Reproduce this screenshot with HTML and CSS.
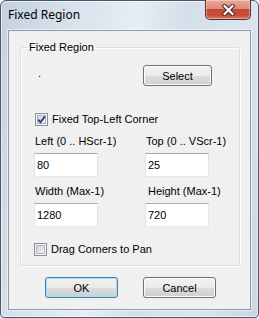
FILE: index.html
```html
<!DOCTYPE html>
<html>
<head>
<meta charset="utf-8">
<link rel="stylesheet" href="styles.css">
</head>
<body>
<div class="window">
  <div class="titlebar">
    <span class="title">Fixed Region</span>
    <button class="close" aria-label="Close">
      <svg width="13" height="12" viewBox="0 0 13 12">
        <path d="M2.5 2 L10.5 10 M10.5 2 L2.5 10" stroke="#4a2a25" stroke-width="4.2" stroke-linecap="square" fill="none"/>
        <path d="M2.5 2 L10.5 10 M10.5 2 L2.5 10" stroke="#ffffff" stroke-width="2.2" stroke-linecap="square" fill="none"/>
      </svg>
    </button>
  </div>
  <div class="client">
    <fieldset class="group">
      <legend class="group-label">Fixed Region</legend>
      <div class="select-row">
        <span class="dot">.</span>
        <button class="btn select-btn">Select</button>
      </div>
      <label class="check first-check">
        <span class="box">
          <svg width="9" height="9" viewBox="0 0 9 9">
            <path d="M1.2 4.6 L3.5 7.2 L8 1.2" stroke="#2b3f86" stroke-width="1.9" fill="none"/>
          </svg>
        </span>
        <span>Fixed Top-Left Corner</span>
      </label>
      <div class="fields">
        <div class="field">
          <span class="field-label">Left (0 .. HScr-1)</span>
          <div class="input">80</div>
        </div>
        <div class="field">
          <span class="field-label">Top (0 .. VScr-1)</span>
          <div class="input">25</div>
        </div>
        <div class="field">
          <span class="field-label">Width (Max-1)</span>
          <div class="input">1280</div>
        </div>
        <div class="field">
          <span class="field-label right-pad">Height (Max-1)</span>
          <div class="input">720</div>
        </div>
      </div>
      <label class="check drag-check">
        <span class="box empty"></span>
        <span>Drag Corners to Pan</span>
      </label>
    </fieldset>
    <div class="actions">
      <button class="btn default">OK</button>
      <button class="btn">Cancel</button>
    </div>
  </div>
</div>
</body>
</html>
```
FILE: styles.css
```css
* { box-sizing: border-box; }
html, body { margin: 0; padding: 0; }
body {
  width: 259px;
  height: 318px;
  overflow: hidden;
  background: #ffffff;
  font-family: "Liberation Sans", Arial, sans-serif;
  font-size: 11px;
  color: #000;
}
.window {
  width: 259px;
  height: 318px;
  border: 1px solid #4f5862;
  border-radius: 6px 6px 4px 4px;
  background: linear-gradient(100deg, #c3d1df 0%, #d9e3ee 25%, #e6edf4 45%, #d3dfeb 60%, #dbe5ef 80%, #c8d5e3 100%);
  box-shadow: inset 0 0 0 1px rgba(255,255,255,0.55);
  display: flex;
  flex-direction: column;
}
.titlebar {
  height: 29px;
  display: flex;
  align-items: flex-start;
  flex-shrink: 0;
}
.title {
  font-family: "Noto Sans", "Open Sans", sans-serif;
  font-size: 12px;
  line-height: 16px;
  margin: 6px 0 0 7px;
  flex: 1;
  color: #000;
}
.close {
  margin: -1px 7px 0 0;
  width: 46px;
  height: 20px;
  padding: 0;
  border: 1px solid #5a2b24;
  border-top: none;
  border-radius: 0 0 5px 5px;
  background: linear-gradient(#e9a99b 0%, #dd8a78 45%, #c7482f 50%, #c44e36 80%, #d77b5f 100%);
  box-shadow: inset 0 0 0 1px rgba(255,220,210,0.5);
  display: flex;
  align-items: center;
  justify-content: center;
}
.close svg { display: block; margin-left: 1px; }
.client {
  margin: 0 7px 7px 7px;
  flex: 1;
  background: #f0f0f0;
  border: 1px solid #8e9aa6;
  box-shadow: 0 0 0 1px rgba(255,255,255,0.5);
  display: flex;
  flex-direction: column;
}
.group {
  margin: 10px 10px 0 11px;
  padding: 0 0 9px 0;
  border: 1px solid #d5dfe5;
  border-radius: 3px;
  box-shadow: inset 1px 1px 0 #ffffff, 1px 1px 0 #ffffff;
  min-width: 0;
}
.group-label {
  margin-left: 6px;
  padding: 0 2px;
  line-height: 13px;
}
.select-row {
  margin-top: 11px;
  padding: 0 27px 0 17px;
  display: flex;
  justify-content: space-between;
  align-items: flex-start;
}
.dot {
  line-height: 13px;
  margin-top: 2px;
}
.btn {
  font-family: "Liberation Sans", Arial, sans-serif;
  font-size: 11px;
  color: #000;
  height: 21px;
  padding: 0;
  border: 1px solid #707070;
  border-radius: 3px;
  background: linear-gradient(#f2f2f2 0%, #ebebeb 50%, #dddddd 50%, #cfcfcf 100%);
  box-shadow: inset 0 0 0 1px #fbfbfb;
}
.select-btn { width: 69px; }
.check {
  display: flex;
  align-items: center;
  gap: 4px;
  line-height: 13px;
}
.first-check { margin-top: 27px; padding-left: 14px; }
.drag-check { margin-top: 16px; padding-left: 13px; }
.box {
  width: 13px;
  height: 13px;
  border: 1px solid #8e8f8f;
  background: #f4f4f4;
  box-shadow: inset 0 0 0 1px #f6f6f6, inset 0 0 0 2px #b0b7c1;
  background-image: linear-gradient(135deg, #c9ced6, #f5f6f7);
  display: flex;
  align-items: center;
  justify-content: center;
  flex-shrink: 0;
}
.box svg { display: block; }
.fields {
  margin-top: 9px;
  padding-left: 13px;
  display: grid;
  grid-template-columns: 64px 64px;
  column-gap: 47px;
  row-gap: 8px;
}
.field {
  display: flex;
  flex-direction: column;
  gap: 5px;
}
.field-label {
  line-height: 13px;
  padding-left: 1px;
  white-space: nowrap;
}
.right-pad { padding-left: 3px; }
.input {
  width: 64px;
  height: 24px;
  background: #fff;
  border: 1px solid #e2e3ea;
  border-top-color: #abadb3;
  border-bottom-color: #e3e9ef;
  padding: 0 0 0 2px;
  line-height: 22px;
}
.actions {
  margin-top: 11px;
  padding-left: 36px;
  display: flex;
  gap: 25px;
}
.actions .btn { width: 73px; }
.btn.default {
  border-color: #3c7fb1;
  box-shadow: inset 0 0 0 1px #a9dff7;
}
```
